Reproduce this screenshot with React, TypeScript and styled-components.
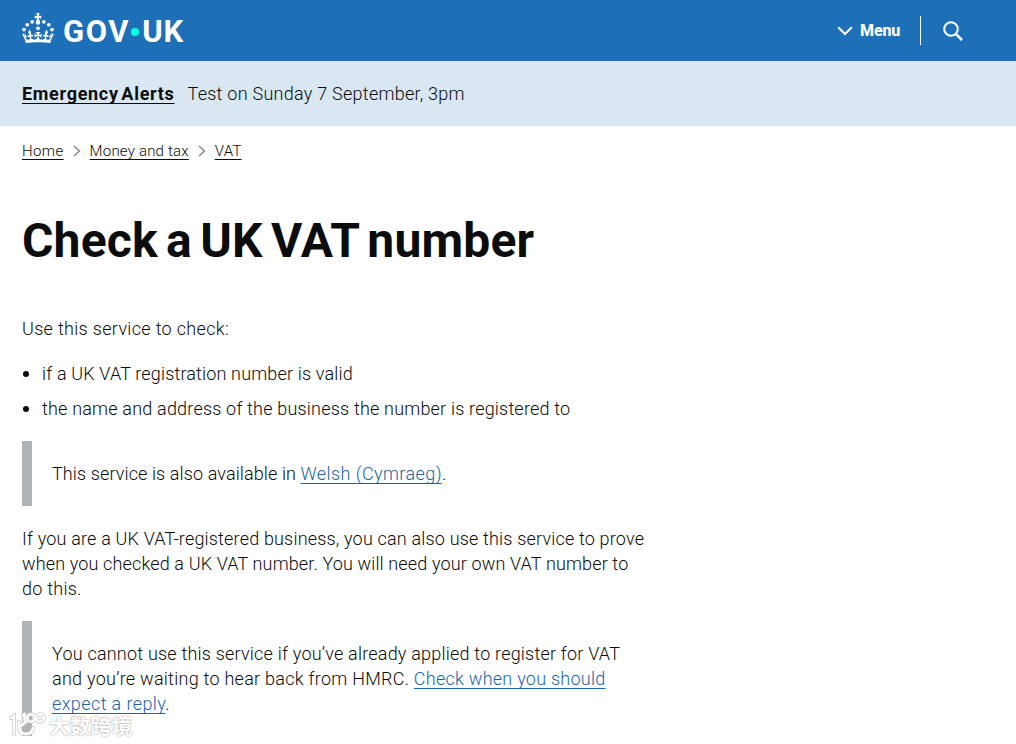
import React from "react";
import styled, { createGlobalStyle, ThemeProvider } from "styled-components";

const theme = {
  colors: {
    text: "#0b0c0c",
    brand: "#1d70b8",
    banner: "#d9e7f2",
    link: "#1a65a6",
    border: "#b1b4b6",
    chevron: "#85898c",
    dot: "#00ffe0",
    white: "#ffffff",
  },
};

const App = () => {
  return (
    <ThemeProvider theme={theme}>
      <GlobalStyle />
      <Header>
        <HomeLink aria-label="GOV.UK">
          <Crown />
          <Wordmark>
            <Tracked $spacing={1.6}>GOV</Tracked>
            <LogoDot />
            <Tracked $spacing={0.8}>UK</Tracked>
          </Wordmark>
        </HomeLink>
        <HeaderNav>
          <MenuButton>
            <svg width="16" height="10" viewBox="0 0 16 10" fill="none">
              <path d="M1.2 1.2L8 8L14.8 1.2" stroke="#fff" strokeWidth="2" />
            </svg>
            <span>Menu</span>
          </MenuButton>
          <SearchButton aria-label="Search">
            <svg width="20" height="20" viewBox="0 0 20 20" fill="none">
              <circle cx="8" cy="8" r="6.8" stroke="#fff" strokeWidth="2" />
              <path d="M12.8 12.8L19 19" stroke="#fff" strokeWidth="2.6" />
            </svg>
          </SearchButton>
        </HeaderNav>
      </Header>

      <Banner>
        <BannerLink>Emergency Alerts</BannerLink>
        <Tracked $spacing={0.26}>Test on Sunday 7 September, 3pm</Tracked>
      </Banner>

      <Breadcrumbs>
        <Crumb $spacing={0.38}>Home</Crumb>
        <CrumbChevron />
        <Crumb $spacing={0.2}>Money and tax</Crumb>
        <CrumbChevron />
        <Crumb $spacing={0.25}>VAT</Crumb>
      </Breadcrumbs>

      <Main>
        <Title>Check a UK VAT number</Title>
        <Paragraph>
          <Line $spacing={0.32}>Use this service to check:</Line>
        </Paragraph>
        <List>
          <Item>
            <Tracked $spacing={0.16}>if a UK VAT registration number is valid</Tracked>
          </Item>
          <Item>
            <Tracked $spacing={0.195}>the name and address of the business the number is registered to</Tracked>
          </Item>
        </List>
        <Inset>
          <Line $spacing={0.11}>
            This service is also available in <Link $spacing={0.42}>Welsh (Cymraeg)</Link>.
          </Line>
        </Inset>
        <Paragraph>
          <Line $spacing={0.18}>
            If you are a UK VAT-registered business, you can also use this service to prove
          </Line>
          <Line $spacing={0.14}>
            when you checked a UK VAT number. You will need your own VAT number to
          </Line>
          <Line $spacing={0.25}>do this.</Line>
        </Paragraph>
        <Inset>
          <Line $spacing={0.21}>
            You cannot use this service if you’ve already applied to register for VAT
          </Line>
          <Line $spacing={0.265}>
            and you’re waiting to hear back from HMRC. <Link $spacing={0.26}>Check when you should</Link>
          </Line>
          <Line $spacing={0.4}>
            <Link $spacing={0.4}>expect a reply</Link>.
          </Line>
        </Inset>
      </Main>

      <Watermark>
        <svg width="39" height="28" viewBox="0 0 39 28" fill="none" strokeLinecap="round">
          <g stroke="#c4c5c7" strokeWidth="4">
            <WatermarkStrokes />
          </g>
          <g stroke="#fff" strokeWidth="2.6">
            <WatermarkStrokes />
          </g>
        </svg>
        <span>大数跨境</span>
      </Watermark>
    </ThemeProvider>
  );
};

export default App;

const Crown = () => (
  <svg width="32" height="30" viewBox="0 0 63.4 60" fill="#fff">
    <circle cx="20" cy="17.6" r="3.7" />
    <circle cx="10.2" cy="23.5" r="3.7" />
    <circle cx="3.7" cy="33.2" r="3.7" />
    <circle cx="31.7" cy="30.6" r="3.7" />
    <circle cx="43.3" cy="17.6" r="3.7" />
    <circle cx="53.2" cy="23.5" r="3.7" />
    <circle cx="59.7" cy="33.2" r="3.7" />
    <path d="M33.1,9.8c.2-.1.3-.3.5-.5l4.6,2.4v-6.8l-4.6,1.5c-.1-.2-.3-.3-.5-.5l1.9-5.9h-6.7l1.9,5.9c-.2.1-.3.3-.5.5l-4.6-1.5v6.8l4.6-2.4c.1.2.3.3.5.5l-2.6,8c-.9,2.8,1.2,5.7,4.1,5.7h0c3,0,5.1-2.9,4.1-5.7l-2.6-8ZM37,37.9s-3.4,3.8-4.1,6.1c2.2,0,4.2-.5,6.4-2.8l-.7,8.5c-2-2.8-4.4-4.1-5.7-3.8.1,3.1.5,6.7,5.8,7.2,3.7.3,6.7-1.5,7-3.8.4-2.6-2-4.3-3.7-1.6-1.4-4.5,2.4-6.1,4.9-3.2-1.9-4.5-1.8-7.7,2.4-10.9,3,4,2.6,7.3-1.2,11.1,2.4-1.3,6.2,0,4,4.6-1.2-2.8-3.7-2.2-4.2.2-.3,1.7.7,3.7,3,4.2,1.9.3,4.7-.9,7-5.9-1.3,0-2.4.7-3.9,1.7l2.4-8c.6,2.3,1.4,3.7,2.2,4.5.6-1.6.5-2.8,0-5.3l5,1.8c-2.6,3.6-5.2,8.7-7.3,17.5-7.4-1.1-15.7-1.7-24.5-1.7h0c-8.8,0-17.1.6-24.5,1.7-2.1-8.9-4.7-13.9-7.3-17.5l5-1.8c-.5,2.5-.6,3.7,0,5.3.8-.8,1.6-2.3,2.2-4.5l2.4,8c-1.5-1-2.6-1.7-3.9-1.7,2.3,5,5.2,6.2,7,5.9,2.3-.4,3.3-2.4,3-4.2-.5-2.4-3-3.1-4.2-.2-2.2-4.6,1.6-6,4-4.6-3.7-3.7-4.2-7.1-1.2-11.1,4.2,3.2,4.3,6.4,2.4,10.9,2.5-2.8,6.3-1.3,4.9,3.2-1.8-2.7-4.1-1-3.7,1.6.3,2.3,3.3,4.1,7,3.8,5.4-.5,5.7-4.2,5.8-7.2-1.3-.2-3.7,1-5.7,3.8l-.7-8.5c2.2,2.3,4.2,2.7,6.4,2.8-.7-2.3-4.1-6.1-4.1-6.1h10.6,0Z" />
  </svg>
);

const CrumbChevron = () => (
  <ChevronIcon width="8" height="12" viewBox="0 0 8 12" fill="none">
    <path d="M1 1L6.4 6L1 11" stroke={theme.colors.chevron} strokeWidth="1.5" />
  </ChevronIcon>
);

const WatermarkStrokes = () => (
  <>
    <path d="M3 7L6 5V23" />
    <path d="M18 11L11 16" />
    <path d="M11 11V17Q12 23 18 23Q24 23 25 17" />
    <circle cx="23" cy="7" r="3.8" />
    <circle cx="32" cy="7" r="3.8" />
    <path d="M15 4L16.5 3.5V9" />
  </>
);

const GlobalStyle = createGlobalStyle`
  body {
    margin: 0;
    height: 744px;
    overflow: hidden;
    background: #fff;
    color: ${theme.colors.text};
    font-family: Roboto, "Liberation Sans", sans-serif;
    font-size: 18px;
    font-weight: 350;
    line-height: 25px;
  }
`;

const Tracked = styled.span<{ $spacing: number }>`
  letter-spacing: ${({ $spacing }) => $spacing}px;
`;

const Header = styled.header`
  display: flex;
  align-items: center;
  justify-content: space-between;
  height: 61px;
  padding: 0 53px 0 22px;
  box-sizing: border-box;
  color: ${({ theme }) => theme.colors.white};
  background: ${({ theme }) => theme.colors.brand};
`;

const HomeLink = styled.a`
  display: flex;
  align-items: center;
  gap: 9px;

  svg {
    margin-bottom: 5px;
  }
`;

const Wordmark = styled.span`
  display: flex;
  align-items: center;
  padding-top: 2px;
  font-size: 31px;
  font-weight: 700;
  line-height: 36px;
`;

const LogoDot = styled.i`
  width: 8px;
  height: 8px;
  margin: 0 3px 0 1px;
  border-radius: 50%;
  background: ${({ theme }) => theme.colors.dot};
`;

const HeaderNav = styled.nav`
  display: flex;
  align-items: center;
`;

const MenuButton = styled.a`
  display: flex;
  align-items: center;
  gap: 7px;
  padding-right: 20px;
  border-right: 1px solid #fff;
  font-size: 16px;
  font-weight: 800;
  line-height: 29px;
  letter-spacing: -0.2px;
`;

const SearchButton = styled.a`
  display: flex;
  padding-left: 22px;
`;

const Banner = styled.section`
  display: flex;
  align-items: center;
  gap: 13px;
  height: 65px;
  padding: 0 22px;
  background: ${({ theme }) => theme.colors.banner};
`;

const BannerLink = styled.a`
  font-weight: 700;
  letter-spacing: 0.7px;
  word-spacing: -2.5px;
  text-decoration: underline;
  text-decoration-thickness: 1px;
  text-underline-offset: 3px;
  text-decoration-skip-ink: none;
`;

const Breadcrumbs = styled.nav`
  display: flex;
  align-items: center;
  height: 20px;
  padding: 15px 22px 0;
  font-size: 15px;
  line-height: 20px;
`;

const Crumb = styled.a<{ $spacing: number }>`
  letter-spacing: ${({ $spacing }) => $spacing}px;
  text-decoration: underline;
  text-decoration-thickness: 1px;
  text-underline-offset: 3px;
  text-decoration-skip-ink: none;
`;

const ChevronIcon = styled.svg`
  margin: 0 9px;
`;

const Main = styled.main`
  padding: 0 22px;
`;

const Title = styled.h1`
  margin: 55px 0 50px;
  font-size: 48px;
  font-weight: 700;
  line-height: 50px;
  letter-spacing: 0.2px;
  word-spacing: -3.9px;
`;

const Paragraph = styled.p`
  margin: 0 0 20px;
`;

const Line = styled.span<{ $spacing: number }>`
  display: block;
  white-space: nowrap;
  letter-spacing: ${({ $spacing }) => $spacing}px;
`;

const List = styled.ul`
  margin: 0 0 20px;
  padding: 0;
  list-style: none;
`;

const Item = styled.li`
  display: flex;
  align-items: center;
  margin-bottom: 10px;

  &::before {
    content: "";
    width: 6px;
    height: 6px;
    margin: 0 13px 0 1px;
    border-radius: 50%;
    background: ${({ theme }) => theme.colors.text};
  }
`;

const Inset = styled.div`
  margin-bottom: 20px;
  padding: 20px;
  border-left: 10px solid ${({ theme }) => theme.colors.border};
`;

const Link = styled.a<{ $spacing: number }>`
  color: ${({ theme }) => theme.colors.link};
  letter-spacing: ${({ $spacing }) => $spacing}px;
  text-decoration: underline;
  text-decoration-thickness: 1px;
  text-underline-offset: 3px;
  text-decoration-skip-ink: none;
`;

// sits over the bottom left corner of the page
const Watermark = styled.div`
  position: absolute;
  left: 8px;
  bottom: 5px;
  display: flex;
  align-items: center;
  gap: 2px;
  color: #fff;
  font-family: "Noto Sans CJK SC", sans-serif;
  font-size: 20.8px;
  font-weight: 700;
  line-height: 20px;
  text-shadow: 0 0 1px #aaa, 0 0 2px #aaa;
`;
